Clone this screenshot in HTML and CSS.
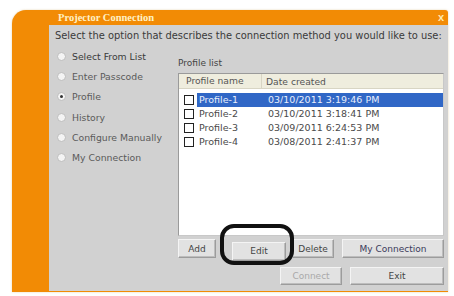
FILE: index.html
```html
<!DOCTYPE html>
<html>
<head>
<meta charset="utf-8">
<link rel="stylesheet" href="styles.css">
</head>
<body>
<div class="window">
  <div class="titlebar">
    <span class="title">Projector Connection</span>
    <span class="close">x</span>
  </div>
  <div class="main">
    <div class="sidebar"></div>
    <div class="panel">
      <div class="instruction">Select the option that describes the connection method you would like to use:</div>
      <div class="content">
        <ul class="options">
          <li class="option strong"><span class="radio"></span>Select From List</li>
          <li class="option"><span class="radio"></span>Enter Passcode</li>
          <li class="option"><span class="radio checked"></span>Profile</li>
          <li class="option"><span class="radio"></span>History</li>
          <li class="option"><span class="radio"></span>Configure Manually</li>
          <li class="option"><span class="radio"></span>My Connection</li>
        </ul>
        <div class="profiles">
          <div class="label">Profile list</div>
          <div class="listbox">
            <div class="header">
              <span class="col-name">Profile name</span>
              <span class="col-date">Date created</span>
            </div>
            <div class="rows">
              <div class="row selected"><span class="check"></span><span class="name">Profile-1</span><span class="date">03/10/2011 3:19:46 PM</span></div>
              <div class="row"><span class="check"></span><span class="name">Profile-2</span><span class="date">03/10/2011 3:18:41 PM</span></div>
              <div class="row"><span class="check"></span><span class="name">Profile-3</span><span class="date">03/09/2011 6:24:53 PM</span></div>
              <div class="row"><span class="check"></span><span class="name">Profile-4</span><span class="date">03/08/2011 2:41:37 PM</span></div>
            </div>
          </div>
          <div class="btnrow">
            <button class="btn b-add">Add</button>
            <div class="edit-wrap">
              <button class="btn b-edit">Edit</button>
              <div class="annotation"></div>
            </div>
            <button class="btn b-delete">Delete</button>
            <button class="btn b-myconn">My Connection</button>
          </div>
          <div class="btnrow bottom">
            <button class="btn b-connect" disabled>Connect</button>
            <button class="btn b-exit">Exit</button>
          </div>
        </div>
      </div>
    </div>
  </div>
</div>
</body>
</html>
```
FILE: styles.css
```css
html, body {
  margin: 0;
  padding: 0;
  background: #ffffff;
}
body {
  width: 454px;
  height: 296px;
  overflow: hidden;
  font-family: "DejaVu Sans", Verdana, sans-serif;
}
.window {
  margin: 10px 0 0 12px;
  width: 436px;
  height: 282px;
  background: #f28b05;
  border-radius: 14px 3px 0 0;
  display: flex;
  flex-direction: column;
  box-shadow: 0 0 2px rgba(200,160,80,0.5);
}
.titlebar {
  height: 15px;
  display: flex;
  align-items: center;
  justify-content: space-between;
  padding: 0 4px 0 46px;
}
.title {
  color: #fff1c6;
  font-weight: bold;
  font-size: 10.5px;
  font-family: "Liberation Serif", serif;
}
.close {
  color: #ffe9b0;
  font-weight: bold;
  font-size: 11px;
  line-height: 11px;
  font-family: "Liberation Sans", Arial, sans-serif;
}
.main {
  flex: 1;
  display: flex;
}
.sidebar {
  width: 37px;
}
.panel {
  flex: 1;
  background: #d1d1d1;
  padding: 4px 3px 0 6px;
  margin-bottom: 1px;
}
.instruction {
  font-size: 9.9px;
  line-height: 13px;
  color: #3a3a3a;
  white-space: nowrap;
}
.content {
  display: flex;
}
.options {
  list-style: none;
  margin: 4px 0 0 0;
  padding: 0 0 0 2px;
  width: 121px;
}
.option {
  height: 20.3px;
  display: flex;
  align-items: center;
  font-size: 9.3px;
  color: #5a5a5a;
}
.option.strong {
  color: #3a3a3a;
}
.radio {
  width: 7px;
  height: 7px;
  border-radius: 50%;
  background: #f4f4f4;
  border: 1px solid #bdbdbd;
  margin-right: 6px;
  position: relative;
}
.radio.checked::after {
  content: "";
  position: absolute;
  left: 2px;
  top: 2px;
  width: 3px;
  height: 3px;
  border-radius: 50%;
  background: #333;
}
.profiles {
  width: 266px;
}
.label {
  margin-top: 15px;
  height: 12px;
  line-height: 12px;
  font-size: 9px;
  color: #444;
}
.listbox {
  margin-top: 4px;
  height: 163px;
  box-sizing: border-box;
  background: #fff;
  border: 1px solid #9a9a9a;
  border-right-color: #c8c8c8;
  border-bottom-color: #c8c8c8;
}
.header {
  height: 14px;
  background: #efedde;
  border-bottom: 1px solid #d8d5c4;
  display: flex;
  align-items: center;
  font-size: 9.2px;
  color: #555;
}
.col-name {
  width: 83px;
  padding-left: 7px;
  box-sizing: border-box;
  border-right: 1px solid #d8d5c4;
  height: 14px;
  line-height: 14px;
}
.col-date {
  padding-left: 4px;
}
.rows {
  padding-top: 4px;
}
.row {
  height: 14px;
  display: flex;
  align-items: center;
  font-size: 9.5px;
  color: #4a4a4a;
  padding-left: 5px;
}
.check {
  width: 8px;
  height: 8px;
  border: 1px solid #222;
  background: #fff;
  margin-right: 3px;
  flex: none;
}
.name {
  width: 69px;
  height: 14px;
  line-height: 14px;
  padding-left: 2px;
}
.date {
  flex: 1;
  height: 14px;
  line-height: 14px;
}
.row.selected .name,
.row.selected .date {
  background: #3067c6;
  color: #e8eefc;
}
.btnrow {
  display: flex;
  margin-top: 3px;
  height: 19px;
}
.btnrow.bottom {
  margin-top: 9px;
  height: 18px;
  justify-content: flex-end;
  gap: 8px;
}
.btn {
  font-family: "DejaVu Sans", Verdana, sans-serif;
  font-size: 9px;
  color: #444;
  background: #e2e2e2;
  border: 1px solid #9c9c9c;
  border-top-color: #f4f4f4;
  border-left-color: #f4f4f4;
  box-shadow: inset -1px -1px 0 #bdbdbd;
  padding: 0;
  height: 100%;
  margin: 0;
}
.b-add { width: 38px; }
.edit-wrap {
  position: relative;
  margin-left: 16px;
  height: 100%;
}
.b-edit { width: 54px; }
.b-delete { width: 42px; margin-left: 6px; }
.b-myconn { width: 102px; margin-left: 8px; color: #3a3a5a; }
.b-connect { width: 62px; color: #a9a9a9; }
.b-exit { width: 94px; }
.annotation {
  position: absolute;
  left: -12px;
  top: -15px;
  width: 74px;
  height: 41px;
  box-sizing: border-box;
  border: 4px solid #111;
  border-radius: 14px;
  pointer-events: none;
}
```
